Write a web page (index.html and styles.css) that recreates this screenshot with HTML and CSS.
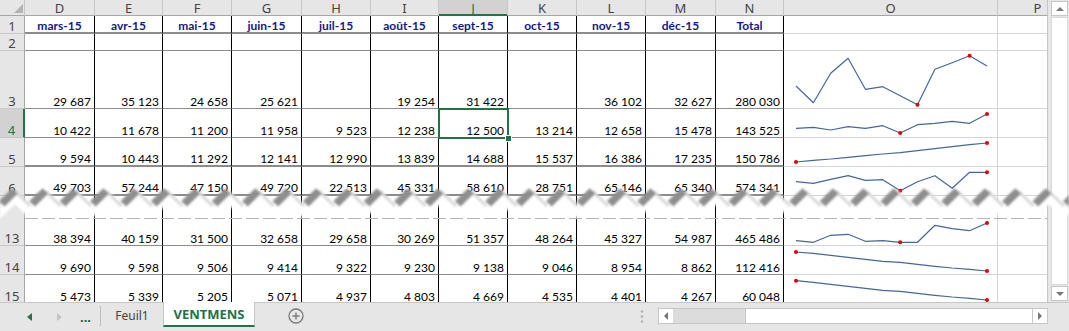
FILE: index.html
```html
<!DOCTYPE html>
<html lang="fr">

<head>
    <meta charset="UTF-8">
    <title>VENTMENS</title>
    <link rel="stylesheet" href="styles.css">
</head>

<body>
    <div class="app">
        <div class="main">
            <div class="sheet">
                <!-- column letters -->
                <div class="row">
                    <div class="ch corner"><svg width="24" height="15"><polygon points="23,4 23,13 14,13" fill="#b4b4b4"/></svg></div>
                    <div class="ch">D</div>
                    <div class="ch">E</div>
                    <div class="ch">F</div>
                    <div class="ch">G</div>
                    <div class="ch">H</div>
                    <div class="ch">I</div>
                    <div class="ch on">J</div>
                    <div class="ch">K</div>
                    <div class="ch">L</div>
                    <div class="ch">M</div>
                    <div class="ch">N</div>
                    <div class="ch">O</div>
                    <div class="ch">P</div>
                </div>
                <!-- 1 -->
                <div class="row months thick">
                    <div class="rh">1</div>
                    <div class="c">mars-15</div>
                    <div class="c">avr-15</div>
                    <div class="c">mai-15</div>
                    <div class="c">juin-15</div>
                    <div class="c">juil-15</div>
                    <div class="c">août-15</div>
                    <div class="c">sept-15</div>
                    <div class="c">oct-15</div>
                    <div class="c">nov-15</div>
                    <div class="c">déc-15</div>
                    <div class="c">Total</div>
                    <div class="g"></div>
                    <div class="g"></div>
                </div>
                <!-- 2 -->
                <div class="row">
                    <div class="rh">2</div>
                    <div class="c"></div>
                    <div class="c"></div>
                    <div class="c"></div>
                    <div class="c"></div>
                    <div class="c"></div>
                    <div class="c"></div>
                    <div class="c"></div>
                    <div class="c"></div>
                    <div class="c"></div>
                    <div class="c"></div>
                    <div class="c"></div>
                    <div class="g"></div>
                    <div class="g"></div>
                </div>
                <!-- 3 -->
                <div class="row">
                    <div class="rh">3</div>
                    <div class="c">29 687</div>
                    <div class="c">35 123</div>
                    <div class="c">24 658</div>
                    <div class="c">25 621</div>
                    <div class="c"></div>
                    <div class="c">19 254</div>
                    <div class="c">31 422</div>
                    <div class="c"></div>
                    <div class="c">36 102</div>
                    <div class="c">32 627</div>
                    <div class="c">280 030</div>
                    <div class="g spark">
                        <svg width="213" height="57">
                            <polyline points="12,35 29.4,51.7 46.7,22.3 64.1,7.3 81.4,38.3 98.8,35.7 116.2,44.7 133.5,53.7 150.9,18.3 168.2,11.7 185.6,4.7 203,15"/>
                            <circle cx="133.5" cy="53.7" r="2"/>
                            <circle cx="185.6" cy="4.7" r="2"/>
                        </svg>
                    </div>
                    <div class="g"></div>
                </div>
                <!-- 4 -->
                <div class="row">
                    <div class="rh on">4</div>
                    <div class="c">10 422</div>
                    <div class="c">11 678</div>
                    <div class="c">11 200</div>
                    <div class="c">11 958</div>
                    <div class="c">9 523</div>
                    <div class="c">12 238</div>
                    <div class="c sel">12 500</div>
                    <div class="c">13 214</div>
                    <div class="c">12 658</div>
                    <div class="c">15 478</div>
                    <div class="c">143 525</div>
                    <div class="g spark">
                        <svg width="213" height="28">
                            <polyline points="12,19.3 29.4,18.3 46.7,21 64.1,17.7 81.4,19.3 98.8,16.7 116.2,24 133.5,15.7 150.9,14.3 168.2,12.3 185.6,14.3 203,5"/>
                            <circle cx="116.2" cy="24" r="2"/>
                            <circle cx="203" cy="5" r="2"/>
                        </svg>
                    </div>
                    <div class="g"></div>
                </div>
                <!-- 5 -->
                <div class="row thick">
                    <div class="rh">5</div>
                    <div class="c">9 594</div>
                    <div class="c">10 443</div>
                    <div class="c">11 292</div>
                    <div class="c">12 141</div>
                    <div class="c">12 990</div>
                    <div class="c">13 839</div>
                    <div class="c">14 688</div>
                    <div class="c">15 537</div>
                    <div class="c">16 386</div>
                    <div class="c">17 235</div>
                    <div class="c">150 786</div>
                    <div class="g spark">
                        <svg width="213" height="28">
                            <polyline points="12,24 29.4,22.3 46.7,21 64.1,19.3 81.4,17.7 98.8,16 116.2,14.7 133.5,12.7 150.9,10.7 168.2,8.7 185.6,6.7 203,5"/>
                            <circle cx="12" cy="24" r="2"/>
                            <circle cx="203" cy="5" r="2"/>
                        </svg>
                    </div>
                    <div class="g"></div>
                </div>
                <!-- 6 -->
                <div class="row thick">
                    <div class="rh">6</div>
                    <div class="c">49 703</div>
                    <div class="c">57 244</div>
                    <div class="c">47 150</div>
                    <div class="c">49 720</div>
                    <div class="c">22 513</div>
                    <div class="c">45 331</div>
                    <div class="c">58 610</div>
                    <div class="c">28 751</div>
                    <div class="c">65 146</div>
                    <div class="c">65 340</div>
                    <div class="c">574 341</div>
                    <div class="g spark">
                        <svg width="213" height="28">
                            <polyline points="12,14.7 29.4,16.3 46.7,12.3 64.1,8.7 81.4,13.3 98.8,12.7 116.2,23.7 133.5,14.7 150.9,8.7 168.2,21.3 185.6,5.3 203,5.3"/>
                            <circle cx="116.2" cy="23.7" r="2"/>
                            <circle cx="203" cy="5.3" r="2"/>
                        </svg>
                    </div>
                    <div class="g"></div>
                </div>
                <!-- rows 7 to 12 are cut out -->
                <div class="row gap">
                    <div class="rh"></div>
                    <div class="c"></div>
                    <div class="c"></div>
                    <div class="c"></div>
                    <div class="c"></div>
                    <div class="c"></div>
                    <div class="c"></div>
                    <div class="c"></div>
                    <div class="c"></div>
                    <div class="c"></div>
                    <div class="c"></div>
                    <div class="c"></div>
                    <div class="g"></div>
                    <div class="g"></div>
                </div>
                <!-- 13 -->
                <div class="row">
                    <div class="rh">13</div>
                    <div class="c">38 394</div>
                    <div class="c">40 159</div>
                    <div class="c">31 500</div>
                    <div class="c">32 658</div>
                    <div class="c">29 658</div>
                    <div class="c">30 269</div>
                    <div class="c">51 357</div>
                    <div class="c">48 264</div>
                    <div class="c">45 327</div>
                    <div class="c">54 987</div>
                    <div class="c">465 486</div>
                    <div class="g spark">
                        <svg width="213" height="28">
                            <polyline points="12,23.7 29.4,25.3 46.7,18.3 64.1,17.3 81.4,24.3 98.8,23.7 116.2,25.3 133.5,25.3 150.9,8.3 168.2,11.7 185.6,13.7 203,6"/>
                            <circle cx="116.2" cy="25.3" r="2"/>
                            <circle cx="203" cy="6" r="2"/>
                        </svg>
                    </div>
                    <div class="g"></div>
                </div>
                <!-- 14 -->
                <div class="row">
                    <div class="rh">14</div>
                    <div class="c">9 690</div>
                    <div class="c">9 598</div>
                    <div class="c">9 506</div>
                    <div class="c">9 414</div>
                    <div class="c">9 322</div>
                    <div class="c">9 230</div>
                    <div class="c">9 138</div>
                    <div class="c">9 046</div>
                    <div class="c">8 954</div>
                    <div class="c">8 862</div>
                    <div class="c">112 416</div>
                    <div class="g spark">
                        <svg width="213" height="28">
                            <polyline points="12,6 29.4,7.3 46.7,9.3 64.1,11.3 81.4,13.3 98.8,15.3 116.2,16.3 133.5,18.3 150.9,20.3 168.2,22 185.6,23.3 203,25"/>
                            <circle cx="12" cy="6" r="2"/>
                            <circle cx="203" cy="25" r="2"/>
                        </svg>
                    </div>
                    <div class="g"></div>
                </div>
                <!-- 15 -->
                <div class="row">
                    <div class="rh">15</div>
                    <div class="c">5 473</div>
                    <div class="c">5 339</div>
                    <div class="c">5 205</div>
                    <div class="c">5 071</div>
                    <div class="c">4 937</div>
                    <div class="c">4 803</div>
                    <div class="c">4 669</div>
                    <div class="c">4 535</div>
                    <div class="c">4 401</div>
                    <div class="c">4 267</div>
                    <div class="c">60 048</div>
                    <div class="g spark">
                        <svg width="213" height="28">
                            <polyline points="12,5.7 29.4,7.3 46.7,9.3 64.1,11.3 81.4,13.3 98.8,15.3 116.2,16.3 133.5,18.3 150.9,20.3 168.2,22 185.6,23.3 203,25"/>
                            <circle cx="12" cy="5.7" r="2"/>
                            <circle cx="203" cy="25" r="2"/>
                        </svg>
                    </div>
                    <div class="g"></div>
                </div>
            </div>
            <div class="vscroll">
                <div class="vbtn up"></div>
                <div class="vthumb"></div>
                <div class="vbtn down"></div>
            </div>
        </div>

        <div class="tabs">
            <div class="nav">
                <span class="arr prev"></span>
                <span class="arr next"></span>
                <span class="more">...</span>
            </div>
            <div class="sep"></div>
            <div class="tab">Feuil1</div>
            <div class="tab act">VENTMENS</div>
            <div class="add">
                <svg width="16" height="16"><circle cx="8" cy="8" r="7" fill="none" stroke="#7a7a7a" stroke-width="1.3"/><path d="M8 4.5v7M4.5 8h7" stroke="#7a7a7a" stroke-width="1.4"/></svg>
            </div>
            <div class="grip">
                <svg width="4" height="13"><circle cx="2" cy="1.5" r="1.2"/><circle cx="2" cy="6.5" r="1.2"/><circle cx="2" cy="11.5" r="1.2"/></svg>
            </div>
            <div class="hscroll">
                <div class="hbtn prev"></div>
                <div class="htrack"></div>
                <div class="hthumb"></div>
                <div class="hbtn next"></div>
            </div>
        </div>

        <!-- torn edge where rows 7-12 are hidden -->
        <svg class="tear" width="1069" height="36">
            <defs>
                <pattern id="zig" x="-0.2" y="0" width="30.4" height="36" patternUnits="userSpaceOnUse">
                    <polygon points="-15.2,7 0,22 15.2,7 30.4,22 45.6,7 45.6,20 30.4,35 15.2,20 0,35 -15.2,20" fill="#fff"/>
                    <path d="M-15.2 7L0 22M15.2 7L30.4 22" stroke="#d8d8d8" stroke-width="3"/>
                    <path d="M-28.4 20L-15.2 7M2 20L15.2 7M32.4 20L45.6 7" stroke="#8e8e8e" stroke-width="8"/>
                </pattern>
                <filter id="soft" x="-1%" y="-20%" width="102%" height="140%">
                    <feGaussianBlur stdDeviation="0.8"/>
                </filter>
            </defs>
            <rect width="1069" height="36" fill="url(#zig)" filter="url(#soft)"/>
            <line x1="25" y1="34.5" x2="1047" y2="34.5" stroke="#b4b4b4" stroke-dasharray="13 4"/>
        </svg>
    </div>
</body>

</html>
```

FILE: styles.css
```css
* {
    padding: 0;
    margin: 0;
    box-sizing: border-box;
}

html,
body {
    width: 100%;
    height: 100%;
    overflow: hidden;
}

body {
    background-color: #e6e6e6;
    font-family: Lato, "Liberation Sans", sans-serif;
}

.app {
    position: relative;
    width: 1069px;
    height: 331px;
}

.main {
    display: flex;
    height: 302px;
    background-color: #fff;
}

/* grid of cells */
.sheet {
    width: 1047px;
    height: 302px;
    overflow: hidden;
    display: grid;
    grid-template-columns: 25px 70px 68px 69px 70px 69px 68px 69px 69px 69px 70px 68px 214px 80px;
    grid-template-rows: 16px 18px 17px 58px 29px 29px 29px 21px 29px 29px 29px;
    align-content: start;
}

.row {
    display: contents;
}

.ch {
    display: flex;
    align-items: flex-end;
    justify-content: center;
    background-color: #e6e6e6;
    border-right: 1px solid #c8c8c8;
    border-bottom: 1px solid #a6a6a6;
    font-family: "Noto Sans", sans-serif;
    font-size: 13px;
    line-height: 13px;
    color: #444;
}

.ch.corner {
    display: block;
}

.ch.corner svg {
    display: block;
}

.ch.on {
    background-color: #d2d2d2;
    color: #217346;
    border-bottom-color: #217346;
    box-shadow: inset 0 -1px #217346;
}

.rh {
    display: flex;
    align-items: flex-end;
    justify-content: center;
    background-color: #e6e6e6;
    border-right: 1px solid #a6a6a6;
    border-bottom: 1px solid #c8c8c8;
    font-family: "Noto Sans", sans-serif;
    font-size: 13px;
    line-height: 14px;
    color: #444;
}

.rh.on {
    background-color: #d2d2d2;
    color: #217346;
    border-right: 2px solid #217346;
}

.c {
    display: flex;
    align-items: flex-end;
    justify-content: flex-end;
    padding-right: 3px;
    border-right: 1px solid #000;
    border-bottom: 1px solid #8c8c8c;
    font-size: 12px;
    line-height: 13px;
    color: #000;
    white-space: nowrap;
}

.g {
    border-right: 1px solid #d4d4d4;
    border-bottom: 1px solid #d4d4d4;
}

.thick>.c {
    border-bottom-width: 2px;
}

.months>.c {
    justify-content: center;
    padding-right: 0;
    font-weight: 700;
    color: #16168a;
}

.gap>* {
    border-bottom: none;
}

/* active cell J4 */
.c.sel {
    position: relative;
    z-index: 1;
}

.c.sel::after {
    content: "";
    position: absolute;
    top: -1px;
    left: -1px;
    right: -2px;
    bottom: -2px;
    border: 2px solid #217346;
}

.c.sel::before {
    content: "";
    position: absolute;
    right: -4px;
    bottom: -4px;
    width: 5px;
    height: 5px;
    background-color: #217346;
    box-shadow: 0 0 0 1px #fff;
    z-index: 1;
}

/* sparklines */
.spark svg {
    display: block;
    overflow: visible;
}

.spark polyline {
    fill: none;
    stroke: #44679b;
    stroke-width: 1.2;
    stroke-linejoin: round;
}

.spark circle {
    fill: #e00000;
}

/* vertical scrollbar */
.vscroll {
    width: 22px;
    display: flex;
    flex-direction: column;
    gap: 1px;
    padding: 1px 1px 1px 3px;
    background-color: #e6e6e6;
    border-left: 1px solid #c6c6c6;
}

.vbtn {
    height: 15px;
    display: flex;
    align-items: center;
    justify-content: center;
    background-color: #fff;
    border: 1px solid #c6c6c6;
}

.vbtn::after {
    content: "";
    border-left: 4px solid transparent;
    border-right: 4px solid transparent;
}

.vbtn.up::after {
    border-bottom: 4px solid #777;
}

.vbtn.down::after {
    border-top: 4px solid #777;
}

.vthumb {
    flex: 1;
    background-color: #fff;
    border: 1px solid #dadada;
}

/* sheet tabs */
.tabs {
    display: flex;
    align-items: flex-start;
    height: 29px;
    border-top: 1px solid #c6c6c6;
    background-color: #e6e6e6;
    font-family: "Noto Sans", sans-serif;
}

.nav {
    width: 100px;
    height: 27px;
    display: flex;
    align-items: center;
}

.arr {
    border-top: 4px solid transparent;
    border-bottom: 4px solid transparent;
}

.arr.prev {
    margin-left: 27px;
    border-right: 5px solid #217346;
}

.arr.next {
    margin-left: 25px;
    border-left: 5px solid #c4c4c4;
}

.more {
    margin-left: 18px;
    font-size: 13px;
    font-weight: 700;
    color: #1e5e38;
}

.sep {
    width: 1px;
    height: 20px;
    margin-top: 3px;
    background-color: #bdbdbd;
}

.tab {
    width: 62px;
    height: 24px;
    display: flex;
    align-items: center;
    justify-content: center;
    font-size: 12px;
    color: #444;
}

.tab.act {
    width: 92px;
    height: 25px;
    margin-top: -1px;
    padding-top: 1px;
    background-color: #fff;
    border-left: 1px solid #c6c6c6;
    border-right: 1px solid #c6c6c6;
    border-bottom: 2px solid #217346;
    font-size: 13px;
    font-weight: 700;
    color: #217346;
}

.add {
    margin-left: 33px;
    margin-top: 5px;
}

.add svg,
.grip svg {
    display: block;
}

.grip {
    margin-left: auto;
    margin-top: 7px;
}

.grip circle {
    fill: #b0b0b0;
}

/* horizontal scrollbar */
.hscroll {
    width: 390px;
    height: 16px;
    margin-top: 5px;
    margin-left: 14px;
    margin-right: 21px;
    display: flex;
    background-color: #fff;
    border: 1px solid #c6c6c6;
}

.hbtn {
    width: 14px;
    display: flex;
    align-items: center;
    justify-content: center;
}

.hbtn::after {
    content: "";
    border-top: 4px solid transparent;
    border-bottom: 4px solid transparent;
}

.hbtn.prev::after {
    border-right: 4px solid #777;
}

.hbtn.next::after {
    border-left: 4px solid #777;
}

.htrack {
    width: 72px;
    background-color: #dcdcdc;
}

.hthumb {
    flex: 1;
    border-left: 1px solid #c6c6c6;
    border-right: 1px solid #c6c6c6;
}

/* torn edge overlay */
.tear {
    position: absolute;
    left: 0;
    top: 184px;
    z-index: 2;
    pointer-events: none;
}
```
